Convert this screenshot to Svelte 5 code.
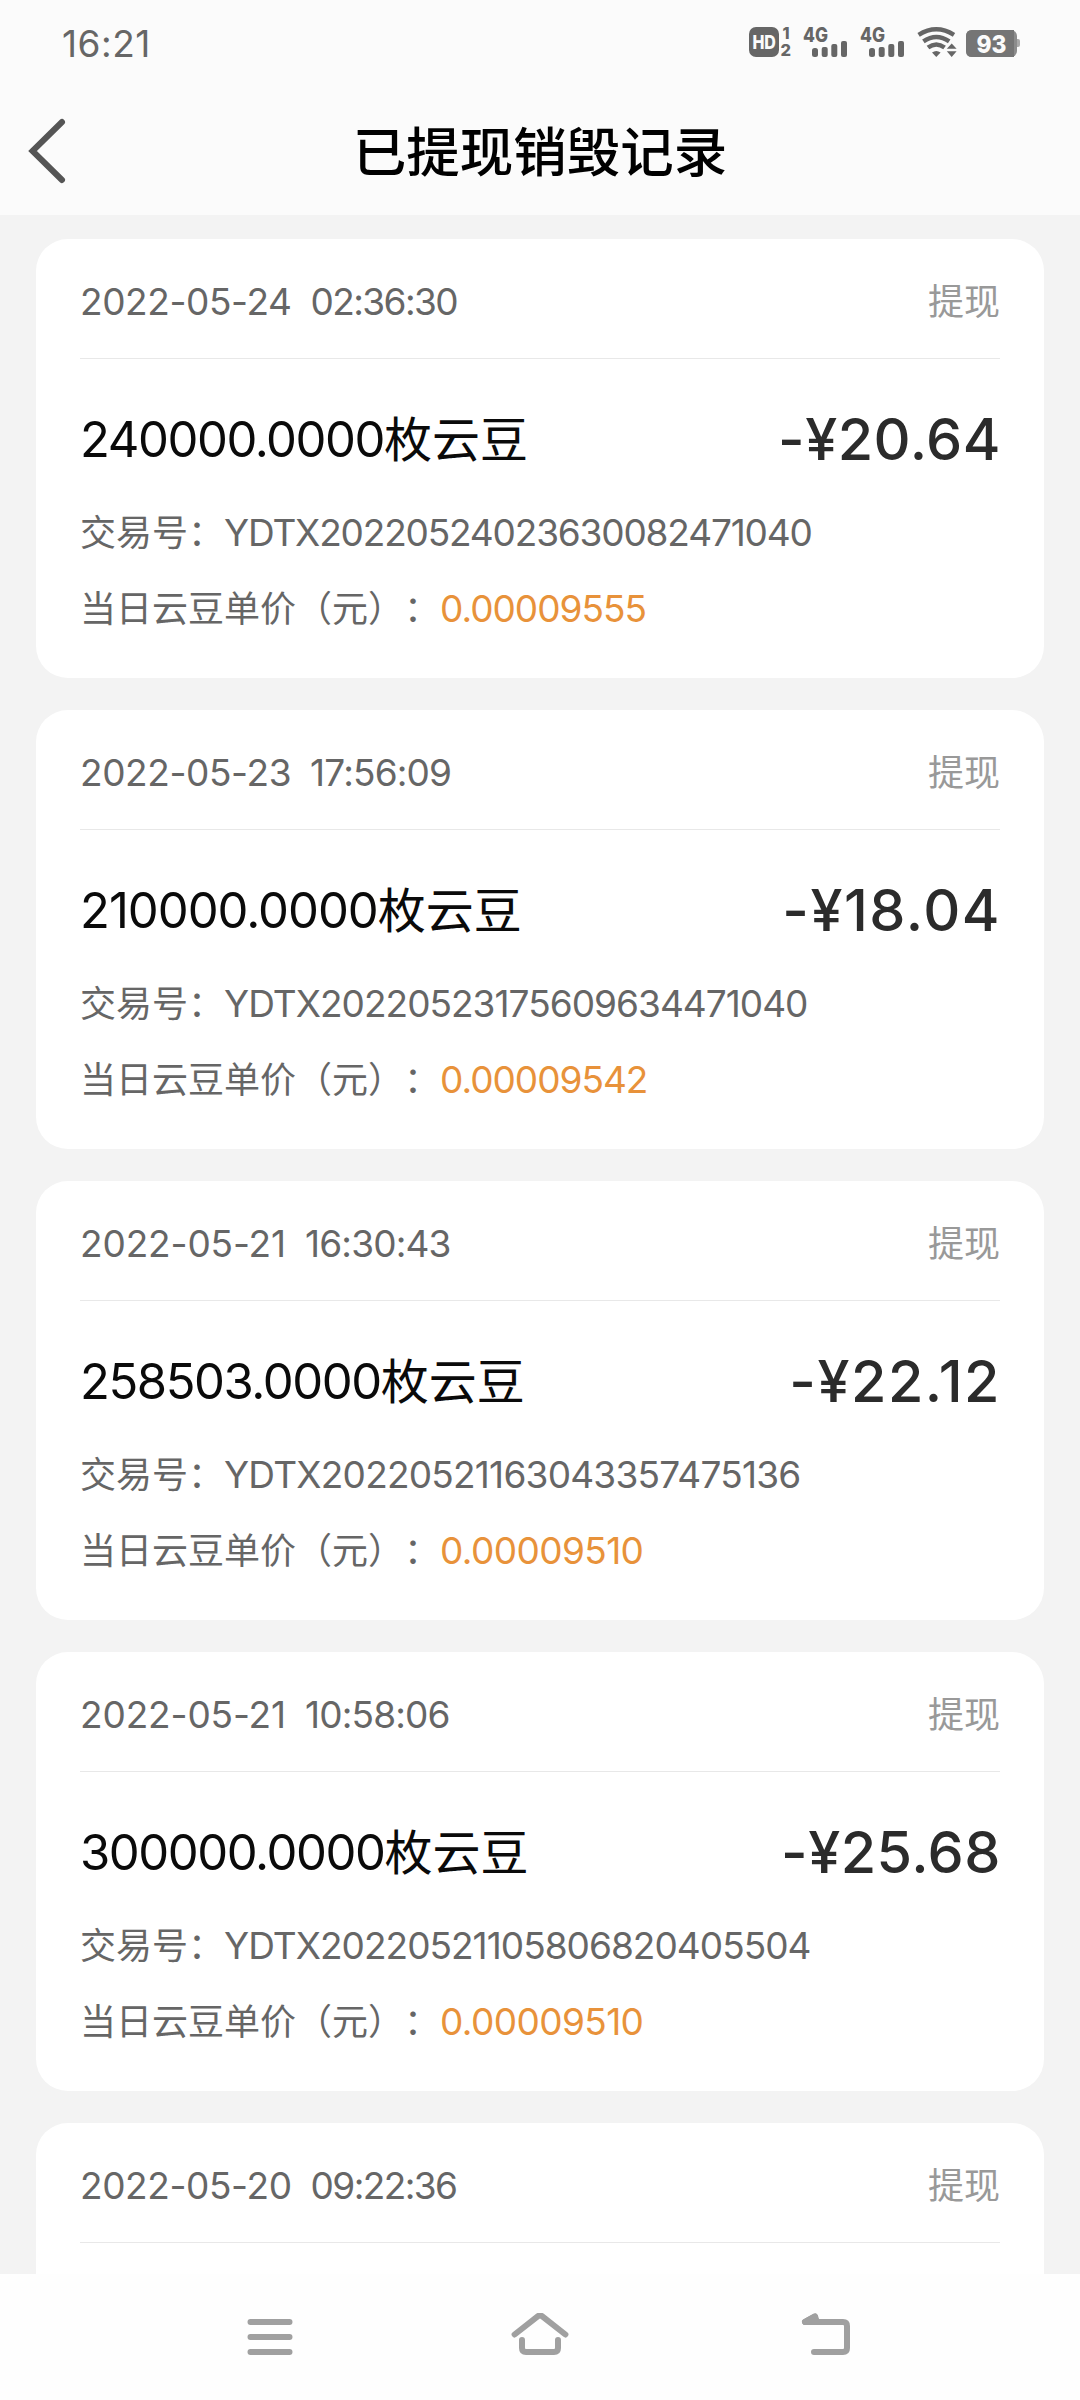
<script lang="ts">
  interface TradeRecord {
    day: string;
    clock: string;
    quantity: string;
    amount: string;
    tradeNo: string;
    price: string;
  }

  const records: TradeRecord[] = [
    {
      day: "2022-05-24",
      clock: "02:36:30",
      quantity: "240000.0000",
      amount: "20.64",
      tradeNo: "YDTX20220524023630082471040",
      price: "0.00009555",
    },
    {
      day: "2022-05-23",
      clock: "17:56:09",
      quantity: "210000.0000",
      amount: "18.04",
      tradeNo: "YDTX20220523175609634471040",
      price: "0.00009542",
    },
    {
      day: "2022-05-21",
      clock: "16:30:43",
      quantity: "258503.0000",
      amount: "22.12",
      tradeNo: "YDTX20220521163043357475136",
      price: "0.00009510",
    },
    {
      day: "2022-05-21",
      clock: "10:58:06",
      quantity: "300000.0000",
      amount: "25.68",
      tradeNo: "YDTX20220521105806820405504",
      price: "0.00009510",
    },
    {
      day: "2022-05-20",
      clock: "09:22:36",
      quantity: "",
      amount: "",
      tradeNo: "",
      price: "",
    },
  ];

  // Inter's "1" is very narrow, so spread the missing width over the whole string
  function tracking(text: string, base: number, perOne: number): string {
    const ones = text.split("1").length - 1;
    return `${(base + (ones * perOne) / text.length).toFixed(2)}px`;
  }
</script>

{#snippet signal()}
  <svg class="signal" width="46" height="30" viewBox="0 0 46 30">
    <text x="0" y="15" font-size="20" textLength="25" lengthAdjust="spacingAndGlyphs">4G</text>
    <rect x="9" y="21" width="6" height="9" rx="2.5" />
    <rect x="18.7" y="20" width="6" height="10" rx="2" />
    <rect x="28.3" y="17" width="6" height="13" rx="2" />
    <rect x="38" y="14" width="6" height="16" rx="2" />
  </svg>
{/snippet}

<div class="screen">
  <div class="status-bar">
    <span class="status-time">16:21</span>
    <div class="status-icons">
      <svg class="hd" width="43" height="30" viewBox="0 0 43 30">
        <rect width="30" height="30" rx="7" />
        <text class="inverse" x="3.4" y="22" font-size="19" textLength="23.5" lengthAdjust="spacingAndGlyphs">HD</text>
        <text x="33.5" y="11.5" font-size="16">1</text>
        <text x="31.5" y="29" font-size="16.5">2</text>
      </svg>
      {@render signal()}
      {@render signal()}
      <svg class="wifi" width="40" height="30" viewBox="0 0 40 30">
        <path class="arc" d="M1.6 7.8 Q19.3 -3.2 37 7.8" />
        <path class="arc" d="M6.4 14.4 Q19.3 5.4 32.2 14.4" />
        <path class="arc" d="M11 20.6 Q19.3 14.2 27.6 20.6" />
        <path d="M15 25.6 Q19.3 22.4 23.6 25.6 L19.3 30 Z" />
        <path class="gap" d="M34.7 12.6 L43 22 V24 L34.7 33 L26.8 24 V22 Z" />
        <path d="M34.7 16.4 L39.6 21.8 H29.8 Z M29.8 24.2 H39.6 L34.7 30 Z" />
      </svg>
      <svg class="battery" width="54" height="27" viewBox="0 0 54 27">
        <path class="tip" d="M50 9 H52 Q54 9 54 11 V15 Q54 17 52 17 H50 Z" />
        <rect class="body" width="51" height="27" rx="6" />
        <path class="charge" d="M6 0 H48 V27 H6 Q0 27 0 21 V6 Q0 0 6 0 Z" />
        <text class="inverse" x="10.5" y="23" font-size="25" textLength="30" lengthAdjust="spacingAndGlyphs">93</text>
      </svg>
    </div>
  </div>

  <header class="title-bar">
    <button class="back" aria-label="返回">
      <svg width="40" height="68" viewBox="0 0 40 68">
        <path d="M35 5 L5.5 34 L35 63" />
      </svg>
    </button>
    <h1>已提现销毁记录</h1>
  </header>

  <main class="list">
    {#each records as record}
      <article class="card">
        <div class="card-head">
          <div class="date">
            <span style:letter-spacing={tracking(record.day, -0.4, 2.7)}>{record.day}</span>
            <span style:letter-spacing={tracking(record.clock, -1.6, 6.2)}>{record.clock}</span>
          </div>
          <span class="type">提现</span>
        </div>
        {#if record.quantity}
          <div class="card-body">
            <div class="summary">
              <div class="quantity">
                <span class="number" style:letter-spacing={tracking(record.quantity, -1.42, 4.6)}>{record.quantity}</span>枚云豆
              </div>
              <div class="amount" style:letter-spacing={tracking(record.amount, 0.5, 5)}>-¥{record.amount}</div>
            </div>
            <div class="row">
              交易号：<span class="value" style:letter-spacing={tracking(record.tradeNo, -1.37, 5.4)}>{record.tradeNo}</span>
            </div>
            <div class="row">
              当日云豆单价（元）：<span class="value price" style:letter-spacing={tracking(record.price, -1, 4)}>{record.price}</span>
            </div>
          </div>
        {/if}
      </article>
    {/each}
  </main>

  <nav class="system-nav">
    <svg width="46" height="42" viewBox="0 0 46 42">
      <path d="M3.5 9 H42.5 M3.5 24 H42.5 M3.5 39 H42.5" />
    </svg>
    <svg width="58" height="44" viewBox="0 0 58 44">
      <path d="M3.6 21.5 L27 3.2 Q29 1.8 31 3.2 L54.4 21.5 M11 27 V35 Q11 39 15 39 H43 Q47 39 47 35 V27" />
    </svg>
    <svg width="50" height="44" viewBox="0 0 50 44">
      <path class="filled" d="M14 3.5 L4 9 H16 Z" />
      <path d="M14 3.5 L4 9 H42 Q46 9 46 13 V35 Q46 39 42 39 H13" />
    </svg>
  </nav>
</div>

<style>
  :global(body) {
    background: #f3f3f3;
  }

  .screen {
    display: flex;
    flex-direction: column;
    width: 1080px;
    height: 2400px;
    overflow: hidden;
    background: #f3f3f3;
    font-family: Inter, "Noto Sans CJK SC", sans-serif;
    color: #666;
    text-spacing-trim: space-all;
  }

  .status-bar {
    display: flex;
    flex: none;
    justify-content: space-between;
    height: 86px;
    padding: 0 60px 0 62px;
    background: #fbfbfb;
  }

  .status-time {
    font-size: 37px;
    line-height: 88px;
    letter-spacing: 0.5px;
  }

  .status-icons {
    display: flex;
    align-items: flex-end;
    height: 57px;
  }

  .status-icons svg {
    display: block;
    overflow: visible;
    fill: #666;
    font-weight: 800;
  }

  .status-icons .inverse {
    fill: #fbfbfb;
  }

  .signal {
    margin-left: 11px;
  }

  .wifi {
    margin-left: 11px;
  }

  .wifi .arc {
    fill: none;
    stroke: #666;
    stroke-width: 4.4;
  }

  .wifi .gap {
    fill: #fbfbfb;
  }

  .battery {
    margin-left: 9px;
  }

  .battery .body {
    fill: #8c8c8c;
  }

  .battery .charge {
    fill: #757575;
  }

  .battery .tip {
    fill: #a9a9a9;
  }

  .title-bar {
    display: grid;
    grid-template-columns: 120px 1fr 120px;
    flex: none;
    height: 129px;
    background: #fbfbfb;
  }

  .back {
    height: 68px;
    margin: 31px 0 0 27px;
    padding: 0;
    border: 0;
    background: none;
    text-align: left;
  }

  .back svg {
    display: block;
    fill: none;
    stroke: #555;
    stroke-width: 6;
    stroke-linecap: round;
  }

  h1 {
    margin: 0;
    color: #000;
    font-size: 53.5px;
    font-weight: 500;
    line-height: 134px;
    text-align: center;
  }

  .list {
    display: flex;
    flex: 1;
    flex-direction: column;
    gap: 32px;
    min-height: 0;
    padding: 24px 36px 0;
    overflow: hidden;
  }

  .card {
    flex: none;
    height: 439px;
    border-radius: 32px;
    background: #fff;
  }

  .card-head {
    display: flex;
    justify-content: space-between;
    height: 114px;
    margin: 0 44px;
    padding-top: 5px;
    border-bottom: 1px solid #e8e8e8;
    line-height: 115px;
  }

  .date {
    display: flex;
    gap: 19px;
    font-size: 37px;
  }

  .type {
    color: #999;
    font-size: 36px;
    line-height: 116px;
  }

  .card-body {
    padding: 40px 44px 32px;
  }

  .summary {
    display: flex;
    justify-content: space-between;
    height: 80px;
    margin-bottom: 15px;
    line-height: 81px;
  }

  .quantity {
    color: #0a0a0a;
    font-size: 48px;
  }

  .number {
    font-size: 49px;
  }

  .amount {
    margin-right: -1px;
    color: #2b2b2b;
    font-size: 57.5px;
    font-weight: 550;
  }

  .row {
    height: 76px;
    font-size: 36px;
    line-height: 77px;
    white-space: nowrap;
  }

  .value {
    font-size: 37px;
  }

  .price {
    color: #e8923a;
  }

  .system-nav {
    display: grid;
    grid-template-columns: 540px 0 540px;
    flex: none;
    justify-items: center;
    height: 126px;
    padding-top: 39px;
    box-sizing: border-box;
    background: #fefefe;
  }

  .system-nav svg {
    display: block;
    fill: none;
    stroke: #a0a0a0;
    stroke-width: 6;
    stroke-linecap: round;
    stroke-linejoin: round;
  }

  .system-nav svg:last-child {
    margin-left: 31px;
  }

  .system-nav .filled {
    fill: #a0a0a0;
  }
</style>
